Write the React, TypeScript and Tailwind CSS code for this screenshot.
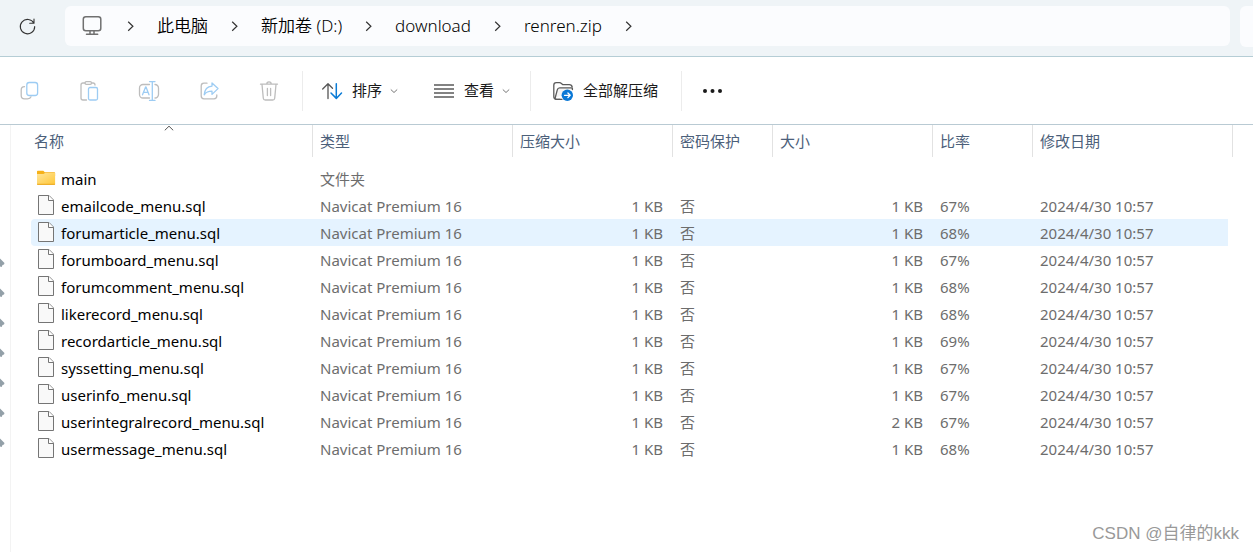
import type { ReactNode } from "react";

type Row = { name: string; type: string; packed: string; locked: string; size: string; ratio: string; date: string; folder?: boolean; active?: boolean };

const sql = (name: string, ratio: string, size = "1 KB", active = false): Row => ({
  name,
  type: "Navicat Premium 16",
  packed: "1 KB",
  locked: "否",
  size,
  ratio,
  date: "2024/4/30 10:57",
  active,
});

const rows: Row[] = [
  { name: "main", type: "文件夹", packed: "", locked: "", size: "", ratio: "", date: "", folder: true },
  sql("emailcode_menu.sql", "67%"),
  sql("forumarticle_menu.sql", "68%", "1 KB", true),
  sql("forumboard_menu.sql", "67%"),
  sql("forumcomment_menu.sql", "68%"),
  sql("likerecord_menu.sql", "68%"),
  sql("recordarticle_menu.sql", "69%"),
  sql("syssetting_menu.sql", "67%"),
  sql("userinfo_menu.sql", "67%"),
  sql("userintegralrecord_menu.sql", "67%", "2 KB"),
  sql("usermessage_menu.sql", "68%"),
];

const crumbs = ["此电脑", "新加卷 (D:)", "download", "renren.zip"];

function Icon({ children }: { children: ReactNode }) {
  return (
    <svg viewBox="0 0 24 24" className="size-6 shrink-0" fill="none" strokeWidth="1.3" strokeLinecap="round" strokeLinejoin="round" aria-hidden="true">
      {children}
    </svg>
  );
}

const GREY = "#bdbdbd";
const BLUE = "#9dccf3";

const CopyIcon = () => (
  <Icon>
    <path stroke={GREY} d="M7.5 7.7C5.200 7.700 4.200 8.700 4.200 11v5.500c0 2.300 1 3.300 3.300 3.300h3c2 0 3-.5 3.500-2" />
    <rect stroke={BLUE} x="9.800" y="3.500" width="10.800" height="13" rx="2.500" />
  </Icon>
);

const PasteIcon = () => (
  <Icon>
    <path stroke={GREY} d="M8 4H6a2 2 0 0 0-2 2v13a2 2 0 0 0 2 2h3.500M14.500 4h1.500a2 2 0 0 1 2 2" />
    <rect stroke={GREY} x="8" y="2.700" width="6.500" height="2.600" rx="1.300" />
    <rect stroke={BLUE} x="11.500" y="8.500" width="9" height="12.500" rx="1.500" />
  </Icon>
);

const RenameIcon = () => (
  <Icon>
    <path stroke={GREY} d="M12.500 5.500H6a3.500 3.500 0 0 0-3.500 3.500v6.500A3.500 3.500 0 0 0 6 19h6.500M18 5.500a3.500 3.500 0 0 1 3.500 3.500v6.500A3.500 3.500 0 0 1 18 19" />
    <path stroke={BLUE} d="M12.500 2.600h5.500M12.500 21.400h5.500M15.300 2.600v18.800M5.500 15.800 8.600 8h.4l3 7.800M6.600 13.300h4.400" />
  </Icon>
);

const ShareIcon = () => (
  <Icon>
    <path stroke={GREY} d="M10 4.200H7A2.800 2.800 0 0 0 4.200 7v10A2.800 2.800 0 0 0 7 19.800h10a2.800 2.800 0 0 0 2.800-2.800v-1" />
    <path stroke={BLUE} d="M15 4l6 5.600-6 5.800v-3.200c-3.600 0-6 1-7.800 3.600.4-5 3-8.400 7.800-8.700z" />
  </Icon>
);

const TrashIcon = () => (
  <Icon>
    <path stroke={GREY} d="M3.500 5.200h17M9.800 5a2.200 2.200 0 0 1 4.400 0M5 5.500l1.300 13.700a2 2 0 0 0 2 1.800h7.400a2 2 0 0 0 2-1.800L19 5.500M10.400 9.500v7M13.600 9.500v7" />
  </Icon>
);

const SortIcon = () => (
  <Icon>
    <path stroke="#555" d="M8 19.500V5M2.700 10 8 4.700l4.500 4.500" />
    <path stroke="#0a7bd6" strokeWidth="1.500" d="M16.300 4.700v14.600M11 14l5.300 5.400 5.200-5.400" />
  </Icon>
);

const ViewIcon = () => (
  <Icon>
    <path stroke="#5a5a5a" strokeLinecap="butt" d="M2 6h20M2 10h20M2 14h20M2 18h20" />
  </Icon>
);

const ExtractIcon = () => (
  <Icon>
    <path stroke="#5a5a5a" d="M9 20.300H5.500c-1.700 0-2.700-1-2.700-2.700V6.200c0-1.600 1-2.500 2.500-2.500h3.200c.8 0 1.300.2 1.900.7l1.500 1.300h6.300c1.700 0 2.800.9 3 2.500" />
    <path fill="#f4f4f4" stroke="#5a5a5a" d="M4 19.500 6.300 10.800c.3-1.300 1-2 2.400-2h11.500c1 0 1.500.8 1.200 1.800M4 19.500c.4.500 1 .8 1.800.8H11" />
    <circle cx="16.300" cy="16.300" r="5.700" fill="#0a78d6" />
    <path stroke="#fff" d="M13.500 16.300h5.500M16.900 14l2.300 2.300-2.300 2.300" />
  </Icon>
);

const MonitorIcon = () => (
  <Icon>
    <rect stroke="#707070" strokeWidth="1.500" x="2.300" y="2.800" width="17.500" height="14" rx="2.500" />
    <path stroke="#707070" strokeWidth="1.500" d="M9 17v3M13 17v3M5.500 20.300h11.200" />
  </Icon>
);

const RefreshIcon = () => (
  <Icon>
    <path stroke="#333" strokeWidth="1.100" d="M18.900 9.300A7.200 7.200 0 1 0 19.700 12.500M19 5v4.300h-4.300" />
  </Icon>
);

const CrumbChevron = () => (
  <svg viewBox="0 0 16 16" className="size-4 shrink-0" fill="none" stroke="#333" strokeWidth="1.200" aria-hidden="true">
    <path d="M5.200 3.800 9.900 8.300l-4.700 4.500" />
  </svg>
);

const DownChevron = () => (
  <svg viewBox="0 0 8 8" className="size-2 shrink-0" fill="none" stroke="#777" aria-hidden="true">
    <path d="M.8 2.500 4 5.500l3.200-3" />
  </svg>
);

const FolderIcon = () => (
  <svg viewBox="0 0 20 20" className="size-5 shrink-0" aria-hidden="true">
    <defs>
      <linearGradient id="folder" x1="0" y1="0" x2="1" y2="1">
        <stop offset="0" stopColor="#ffe59a" />
        <stop offset="1" stopColor="#ffc83a" />
      </linearGradient>
    </defs>
    <path fill="#f6b118" d="M1 2.500c0-.5.300-.8.800-.8h5.500l1.500 1.500H18.500c.4 0 .6.300.6.700V7H1z" />
    <path fill="url(#folder)" d="M1 5h6.500l1.500-1h10.100v11H1z" />
    <path fill="#eeb02c" d="M1 14.800h18.100v.5c0 .4-.2.600-.6.600H1.600c-.4 0-.6-.2-.6-.6z" />
  </svg>
);

const FileIcon = () => (
  <svg viewBox="0 0 20 22" className="h-[22px] w-5 shrink-0" fill="#f9f9f9" stroke="#757575" aria-hidden="true">
    <path d="M2.500 .5h10.500l4.500 4.500v14.500h-15z" />
    <path fill="#fff" d="M12.500 .5v5h5" />
  </svg>
);

const tools = [
  { label: "复制", icon: <CopyIcon /> },
  { label: "粘贴", icon: <PasteIcon /> },
  { label: "重命名", icon: <RenameIcon /> },
  { label: "共享", icon: <ShareIcon /> },
  { label: "删除", icon: <TrashIcon /> },
];

const Divider = () => <div className="h-10 w-px shrink-0 bg-[#ececec]" />;

const headers = ["类型", "压缩大小", "密码保护", "大小", "比率"];

export default function App() {
  return (
    <div className="relative flex min-h-screen flex-col overflow-hidden bg-white font-['Noto_Sans','Noto_Sans_CJK_SC',sans-serif] text-[15px] text-[#1a1a1a]">
      <header className="flex h-[57px] items-start border-b border-[#b5cdd5] bg-[#eff4f7] pt-[6px]">
        <button aria-label="刷新" className="ml-[15px] mr-[26px] flex h-10 items-center">
          <RefreshIcon />
        </button>
        <nav aria-label="地址" className="flex h-10 grow items-center gap-[18px] rounded-md bg-[#fbfcfe] pl-4 text-[17px] font-[350] text-black">
          <MonitorIcon />
          <CrumbChevron />
          {crumbs.map((c) => (
            <div key={c} className="flex items-center gap-[19px]">
              <a href="#" className="whitespace-nowrap">{c}</a>
              <CrumbChevron />
            </div>
          ))}
        </nav>
        <div className="ml-[10px] h-[41px] w-[13px] shrink-0 rounded-l-md bg-[#fbfcfe]" />
      </header>

      <div role="toolbar" className="flex h-[68px] items-center border-b border-[#b9cad3] pl-[9px]">
        <div className="mr-[13px] flex gap-5">
          {tools.map((t) => (
            <button key={t.label} aria-label={t.label} disabled className="flex size-10 items-center justify-center">
              {t.icon}
            </button>
          ))}
        </div>
        <Divider />
        <button className="ml-[17px] flex h-10 items-center gap-2">
          <SortIcon />
          <span>排序</span>
          <DownChevron />
        </button>
        <button className="ml-[34px] mr-5 flex h-10 items-center gap-2">
          <ViewIcon />
          <span>查看</span>
          <DownChevron />
        </button>
        <Divider />
        <button className="ml-5 mr-[23px] flex h-10 items-center gap-2">
          <ExtractIcon />
          <span>全部解压缩</span>
        </button>
        <Divider />
        <button aria-label="更多" className="ml-[18px] flex h-10 items-center">
          <svg viewBox="0 0 24 24" className="size-6" fill="#1a1a1a" aria-hidden="true">
            <circle cx="5" cy="12" r="2" />
            <circle cx="12.500" cy="12" r="2" />
            <circle cx="20" cy="12" r="2" />
          </svg>
        </button>
      </div>

      <main className="flex grow">
        <aside className="flex w-[11px] shrink-0 flex-col border-r border-[#f3f3f3] pt-[123px]">
          {[0, 1, 2, 3, 4, 5, 6].map((i) => (
            <svg key={i} viewBox="0 0 5 30" className="h-[30px] w-[5px] shrink-0" fill="#93a0a8" aria-hidden="true">
              <path d="M0 10.500 4.500 15 4 16.500 2.500 17 1.700 19 0 18.500z" />
            </svg>
          ))}
        </aside>
        <div className="ml-5">
          <table className="w-[1202px] table-fixed border-separate border-spacing-0 text-left">
            <colgroup>
              <col className="w-[282px]" />
              <col className="w-[200px]" />
              <col className="w-[160px]" />
              <col className="w-[100px]" />
              <col className="w-[160px]" />
              <col className="w-[100px]" />
              <col className="w-[195px]" />
              <col className="w-[5px]" />
            </colgroup>
            <thead className="text-[#4c607a]">
              <tr className="h-8">
                <th scope="col" aria-sort="ascending" className="relative border-r border-[#e2e2e2] p-0 pl-[3px] font-normal">
                  名称
                  <svg viewBox="0 0 10 6" className="absolute left-[133px] top-0 h-[6px] w-[10px]" fill="none" stroke="#555" aria-hidden="true">
                    <path d="M.8 5.300 5 1.200l4.200 4.100" />
                  </svg>
                </th>
                {headers.map((h) => (
                  <th key={h} scope="col" className="border-r border-[#e2e2e2] p-0 pl-[7px] font-normal">
                    {h}
                  </th>
                ))}
                <th scope="col" colSpan={2} className="border-r border-[#e2e2e2] p-0 pl-[7px] font-normal">
                  修改日期
                </th>
              </tr>
            </thead>
            <tbody className="text-[#6d6d6d]">
              <tr className="h-2">
                <td colSpan={8} className="p-0" />
              </tr>
              {rows.map((r) => {
                const cell = r.active ? "bg-[#e5f3ff] p-0 pl-[7px]" : "p-0 pl-[7px]";
                const num = r.active ? "bg-[#e5f3ff] p-0 pr-[10px] text-right" : "p-0 pr-[10px] text-right";
                return (
                  <tr key={r.name} className="h-[27px] leading-[22px]">
                    <td className={r.active ? "rounded-l-sm bg-[#e5f3ff] p-0" : "p-0"}>
                      <div className="flex items-center gap-[5px] pl-[5px] text-black">
                        {r.folder ? <FolderIcon /> : <FileIcon />}
                        <span>{r.name}</span>
                      </div>
                    </td>
                    <td className={cell}>{r.type}</td>
                    <td className={num}>{r.packed}</td>
                    <td className={cell}>{r.locked}</td>
                    <td className={num}>{r.size}</td>
                    <td className={cell}>{r.ratio}</td>
                    <td className={cell}>{r.date}</td>
                    <td className="p-0" />
                  </tr>
                );
              })}
            </tbody>
          </table>
        </div>
      </main>

      <div className="absolute bottom-[6px] right-[14px] font-['Liberation_Sans','Noto_Sans_CJK_SC',sans-serif] text-[17px] leading-6 text-[#999]">
        CSDN @自律的kkk
      </div>
    </div>
  );
}
